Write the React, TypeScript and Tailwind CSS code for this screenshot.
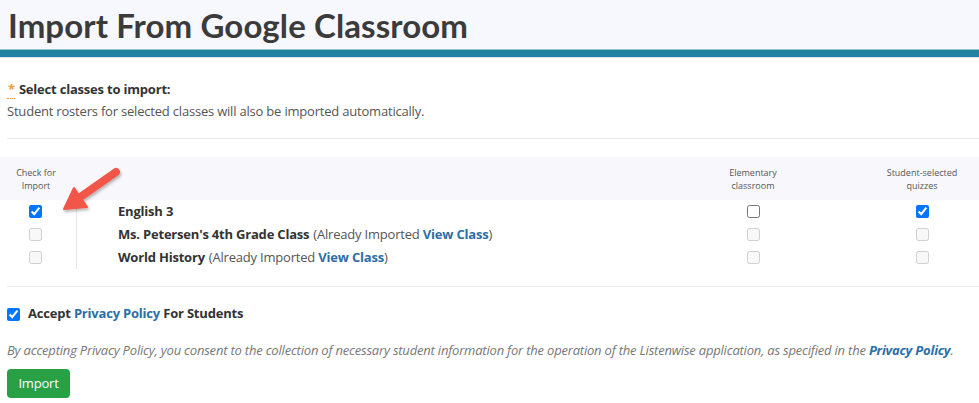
import React, { useState } from 'react';

type ClassRow = {
  id: string;
  name: string;
  imported: boolean;
  selected: boolean;
  elementary: boolean;
  studentQuizzes: boolean;
};

const initialRows: ClassRow[] = [
  { id: 'eng3', name: 'English 3', imported: false, selected: true, elementary: false, studentQuizzes: true },
  { id: 'pet4', name: "Ms. Petersen's 4th Grade Class", imported: true, selected: false, elementary: false, studentQuizzes: false },
  { id: 'wh', name: 'World History', imported: true, selected: false, elementary: false, studentQuizzes: false },
];

const Arrow: React.FC = () => (
  <svg
    className="absolute left-[55px] top-[5px] pointer-events-none"
    width="75"
    height="55"
    viewBox="0 0 75 55"
  >
    <defs>
      <filter id="arrowShadow" x="-20%" y="-20%" width="140%" height="140%">
        <feDropShadow dx="1" dy="2" stdDeviation="1.5" floodColor="#000" floodOpacity="0.3" />
      </filter>
    </defs>
    <g filter="url(#arrowShadow)" fill="#f2574a" stroke="#f2574a">
      <line x1="61" y1="10" x2="24" y2="36" strokeWidth="8" strokeLinecap="round" />
      <polygon points="9,47 32,45 19,26" strokeWidth="2" strokeLinejoin="round" />
    </g>
  </svg>
);

const App: React.FC = () => {
  const [rows, setRows] = useState<ClassRow[]>(initialRows);
  const [accepted, setAccepted] = useState(true);

  const toggle = (id: string, key: 'selected' | 'elementary' | 'studentQuizzes') => {
    setRows(prev => prev.map(r => (r.id === id ? { ...r, [key]: !r[key] } : r)));
  };

  return (
    <div className="min-h-screen bg-white font-['Open_Sans',sans-serif] text-[13px] tracking-[-0.2px] text-[#444]">
      {/* page header */}
      <div className="h-[49px] bg-[#f7f8fd] pl-[8px] flex items-center">
        <h1 className="font-['Lato',sans-serif] font-bold text-[33px] leading-none text-[#3b3b3b] tracking-[0.1px] pt-[1px]">
          Import From Google Classroom
        </h1>
      </div>
      <div className="h-[9px] bg-[#217fa0] border-t border-[#8fc3d4] border-b border-b-[#d8e8ee]" />

      <div className="pt-[22px] px-[7px]">
        <div className="font-bold text-[#333] leading-[19px]">
          <span className="text-[#f09a3e] border-b border-dotted border-[#f09a3e] mr-[4px] pl-[1px]">*</span>
          Select classes to import:
        </div>
        <p className="mt-[2px] text-[#555] leading-[20px]">
          Student rosters for selected classes will also be imported automatically.
        </p>
      </div>
      <div className="mt-[17px] ml-[7px] border-t border-[#ececec]" />

      {/* class table */}
      <div className="relative mt-[18px]">
        <div className="flex h-[43px] items-center bg-[#f8f8fc] text-[9px] tracking-normal leading-[13px] text-[#555]">
          <div className="w-[77px] pr-[5px] text-center">
            Check for
            <br />
            Import
          </div>
          <div className="flex-1" />
          <div className="w-[114px] text-center">
            Elementary
            <br />
            classroom
          </div>
          <div className="w-[55px]" />
          <div className="w-[114px] text-center">
            Student-selected
            <br />
            quizzes
          </div>
        </div>

        <div className="flex">
          <div className="w-[77px] border-r border-[#e6e6e6]">
            {rows.map(r => (
              <div key={r.id} className="h-[23px] flex items-center justify-center pr-[5px]">
                <input
                  type="checkbox"
                  className="m-0 w-[13px] h-[13px]"
                  checked={r.selected}
                  disabled={r.imported}
                  onChange={() => toggle(r.id, 'selected')}
                />
              </div>
            ))}
          </div>
          <div className="flex-1">
            {rows.map(r => (
              <div key={r.id} className="h-[23px] flex items-center pl-[41px] whitespace-nowrap">
                <span className="font-bold text-[#333]">{r.name}</span>
                {r.imported && (
                  <span className="ml-[4px] text-[#555]">
                    (Already Imported{' '}
                    <a href="#" className="font-bold text-[#2c6ea6]">
                      View Class
                    </a>
                    )
                  </span>
                )}
              </div>
            ))}
          </div>
          <div className="w-[114px]">
            {rows.map(r => (
              <div key={r.id} className="h-[23px] flex items-center justify-center">
                <input
                  type="checkbox"
                  className="m-0 w-[13px] h-[13px]"
                  checked={r.elementary}
                  disabled={r.imported}
                  onChange={() => toggle(r.id, 'elementary')}
                />
              </div>
            ))}
          </div>
          <div className="w-[55px]" />
          <div className="w-[114px]">
            {rows.map(r => (
              <div key={r.id} className="h-[23px] flex items-center justify-center">
                <input
                  type="checkbox"
                  className="m-0 w-[13px] h-[13px]"
                  checked={r.studentQuizzes}
                  disabled={r.imported}
                  onChange={() => toggle(r.id, 'studentQuizzes')}
                />
              </div>
            ))}
          </div>
        </div>

        <Arrow />
      </div>

      <div className="mt-[17px] ml-[7px] border-t border-[#ececec]" />

      {/* privacy consent */}
      <div className="px-[7px]">
        <label className="mt-[17px] flex items-center h-[20px] font-bold text-[#333]">
          <input
            type="checkbox"
            className="m-0 w-[13px] h-[13px]"
            checked={accepted}
            onChange={() => setAccepted(a => !a)}
          />
          <span className="ml-[8px]">
            Accept{' '}
            <a href="#" className="text-[#2c6ea6]">
              Privacy Policy
            </a>{' '}
            For Students
          </span>
        </label>
        <p className="mt-[16px] italic text-[#777] leading-[20px] whitespace-nowrap">
          By accepting Privacy Policy, you consent to the collection of necessary student information for the operation of
          the Listenwise application, as specified in the{' '}
          <a href="#" className="font-bold text-[#2c6ea6]">
            Privacy Policy
          </a>
          .
        </p>
        <button
          type="button"
          className="mt-[9px] h-[29px] w-[63px] rounded-[4px] bg-[#28a046] text-white text-[13px] leading-none"
        >
          Import
        </button>
      </div>
    </div>
  );
};

export default App;
